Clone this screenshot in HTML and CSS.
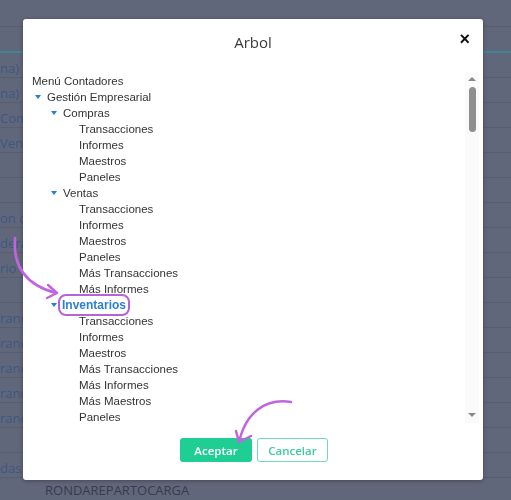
FILE: index.html
```html
<!DOCTYPE html>
<html lang="es">
<head>
  <meta charset="UTF-8">
  <title>Arbol</title>
  <link rel="stylesheet" href="styles.css">
</head>
<body>

  <div class="page">
    <div class="topbar"></div>
    <div class="thead"></div>
    <div class="row"><span class="cut">(Alter</span>na)</div>
    <div class="row"><span class="cut">(Alter</span>na)</div>
    <div class="row"><span class="cut">(</span>Compras)</div>
    <div class="row"><span class="cut">(</span>Ventas)</div>
    <div class="row"></div>
    <div class="row"></div>
    <div class="row"><span class="cut">Recepci</span>on de Pagos</div>
    <div class="row"><span class="cut">Ban</span>dera</div>
    <div class="row"><span class="cut">Inventa</span>rio</div>
    <div class="row"></div>
    <div class="row"><span class="cut">T</span>rancas</div>
    <div class="row"><span class="cut">T</span>rancas</div>
    <div class="row"><span class="cut">T</span>rancas</div>
    <div class="row"><span class="cut">T</span>rancas</div>
    <div class="row"><span class="cut">T</span>rancas</div>
    <div class="row"></div>
    <div class="row"><span class="cut">Entra</span>das</div>
    <div class="row last"><span class="code">RONDAREPARTOCARGA</span></div>
  </div>

  <div class="modal">
    <div class="modal-header">
      <span class="modal-title">Arbol</span>
      <span class="close">&times;</span>
    </div>

    <div class="tree-frame">
      <div class="tree">
        <div class="node">Menú Contadores</div>
        <ul class="level0">
          <li>
            <div class="node"><span class="toggle"><i class="tri"></i></span>Gestión Empresarial</div>
            <ul>
              <li>
                <div class="node"><span class="toggle"><i class="tri"></i></span>Compras</div>
                <ul>
                  <li class="node"><span class="toggle"></span>Transacciones</li>
                  <li class="node"><span class="toggle"></span>Informes</li>
                  <li class="node"><span class="toggle"></span>Maestros</li>
                  <li class="node"><span class="toggle"></span>Paneles</li>
                </ul>
              </li>
              <li>
                <div class="node"><span class="toggle"><i class="tri"></i></span>Ventas</div>
                <ul>
                  <li class="node"><span class="toggle"></span>Transacciones</li>
                  <li class="node"><span class="toggle"></span>Informes</li>
                  <li class="node"><span class="toggle"></span>Maestros</li>
                  <li class="node"><span class="toggle"></span>Paneles</li>
                  <li class="node"><span class="toggle"></span>Más Transacciones</li>
                  <li class="node"><span class="toggle"></span>Más Informes</li>
                </ul>
              </li>
              <li>
                <div class="node"><span class="toggle"><i class="tri"></i></span><span class="selected">Inventarios</span></div>
                <ul>
                  <li class="node"><span class="toggle"></span>Transacciones</li>
                  <li class="node"><span class="toggle"></span>Informes</li>
                  <li class="node"><span class="toggle"></span>Maestros</li>
                  <li class="node"><span class="toggle"></span>Más Transacciones</li>
                  <li class="node"><span class="toggle"></span>Más Informes</li>
                  <li class="node"><span class="toggle"></span>Más Maestros</li>
                  <li class="node"><span class="toggle"></span>Paneles</li>
                  <li class="node"><span class="toggle"></span>Otros</li>
                </ul>
              </li>
            </ul>
          </li>
        </ul>
      </div>
      <div class="scrollbar">
        <i class="arrow-up"></i>
        <div class="thumb"></div>
        <div class="track"></div>
        <i class="arrow-down"></i>
      </div>
    </div>

    <div class="modal-footer">
      <button class="btn btn-ok">Aceptar</button>
      <button class="btn btn-cancel">Cancelar</button>
    </div>
  </div>

  <!-- flechas de anotación -->
  <svg class="annot" width="511" height="500" viewBox="0 0 511 500">
    <path d="M15 238 C13 262 22 284 56 293" />
    <path d="M48 285 L57 293 L47 298" />
    <path d="M291 402 C266 398 246 412 239 442" />
    <path d="M236 431 L239 442 L251 436" />
  </svg>

</body>
</html>
```

FILE: styles.css
```css
body {
  margin: 0;
  background-color: #61677a;
  font-family: "Open Sans", sans-serif;
  overflow: hidden;
}
.page {
  width: 511px;
  height: 500px;
}
.topbar {
  height: 26px;
  border-bottom: 1px solid #585e70;
}
.thead {
  height: 24px;
  border-bottom: 2px solid #3f8593;
}
.row {
  height: 24px;
  padding-top: 5px;
  box-sizing: border-box;
  border-bottom: 1px solid #585e70;
  display: flex;
  align-items: center;
  font-size: 13px;
  color: #3d5783;
  white-space: nowrap;
}
.row:not(.last) {
  height: 25px;
}
.row.last {
  border-bottom: none;
  padding-top: 0;
}
/* prefijo oculto a la izquierda del borde */
.cut {
  width: 0;
  display: flex;
  justify-content: flex-end;
  flex-shrink: 0;
}
.code {
  margin-left: 45px;
  color: #373c4b;
}

.modal {
  position: fixed;
  left: 23px;
  top: 19px;
  width: 460px;
  height: 461px;
  background: white;
  border-radius: 3px;
  box-shadow: 0 1px 4px rgba(0,0,0,0.3);
  display: flex;
  flex-direction: column;
}
.modal-header {
  height: 54px;
  display: flex;
  justify-content: center;
  align-items: flex-start;
  position: relative;
}
.modal-title {
  margin-top: 13px;
  font-size: 15px;
  color: #3a3a3a;
}
.close {
  position: absolute;
  right: 13px;
  top: 10px;
  font-size: 18px;
  font-weight: bold;
  color: #111;
  font-family: "Liberation Sans", sans-serif;
}

.tree-frame {
  height: 350px;
  margin-right: 4px;
  display: flex;
}
.tree {
  flex: 1;
  overflow: hidden;
  padding: 0 0 0 9px;
  font-family: "Liberation Sans", Arial, sans-serif;
  font-size: 11.5px;
  color: #333;
}
.tree ul {
  list-style: none;
  margin: 0;
  padding: 0 0 0 16px;
}
.tree ul.level0 {
  padding-left: 0;
}
.node {
  height: 16px;
  line-height: 16px;
  display: flex;
  align-items: center;
  white-space: nowrap;
}
.toggle {
  width: 15px;
  height: 16px;
  flex-shrink: 0;
  display: flex;
  align-items: center;
  padding-left: 3px;
  box-sizing: border-box;
}
.tri {
  width: 0;
  height: 0;
  border-left: 3px solid transparent;
  border-right: 3px solid transparent;
  border-top: 4px solid #1b80d8;
}
.selected {
  margin-left: -1px;
  font-size: 12px;
  font-weight: bold;
  color: #2f7fcf;
  line-height: 14px;
  outline: 2px solid #b862d9;
  outline-offset: 2px;
  border-radius: 4px;
}

.scrollbar {
  width: 14px;
  background: #fafafa;
  display: flex;
  flex-direction: column;
  align-items: center;
}
.arrow-up, .arrow-down {
  width: 0;
  height: 0;
  border-left: 4px solid transparent;
  border-right: 4px solid transparent;
}
.arrow-up {
  margin-top: 4px;
  border-bottom: 4px solid #8a8a8a;
}
.arrow-down {
  margin-bottom: 6px;
  border-top: 4px solid #8a8a8a;
}
.thumb {
  margin-top: 6px;
  width: 7px;
  height: 45px;
  border-radius: 4px;
  background: #8f8f8f;
}
.track {
  flex: 1;
}

.modal-footer {
  display: flex;
  justify-content: center;
  gap: 5px;
  padding-top: 15px;
  padding-left: 2px;
}
.btn {
  height: 24px;
  border-radius: 3px;
  font-family: "Open Sans", sans-serif;
  font-size: 11.5px;
  font-weight: 600;
  padding: 0;
  cursor: pointer;
}
.btn-ok {
  width: 72px;
  background-color: #1fce92;
  border: none;
  color: white;
}
.btn-cancel {
  width: 71px;
  background: white;
  border: 1.5px solid #6edbb5;
  color: #3dcb9a;
}

.annot {
  position: fixed;
  left: 0;
  top: 0;
  pointer-events: none;
}
.annot path {
  fill: none;
  stroke: #c264de;
  stroke-width: 2.5;
  stroke-linecap: round;
  stroke-linejoin: round;
}
```
